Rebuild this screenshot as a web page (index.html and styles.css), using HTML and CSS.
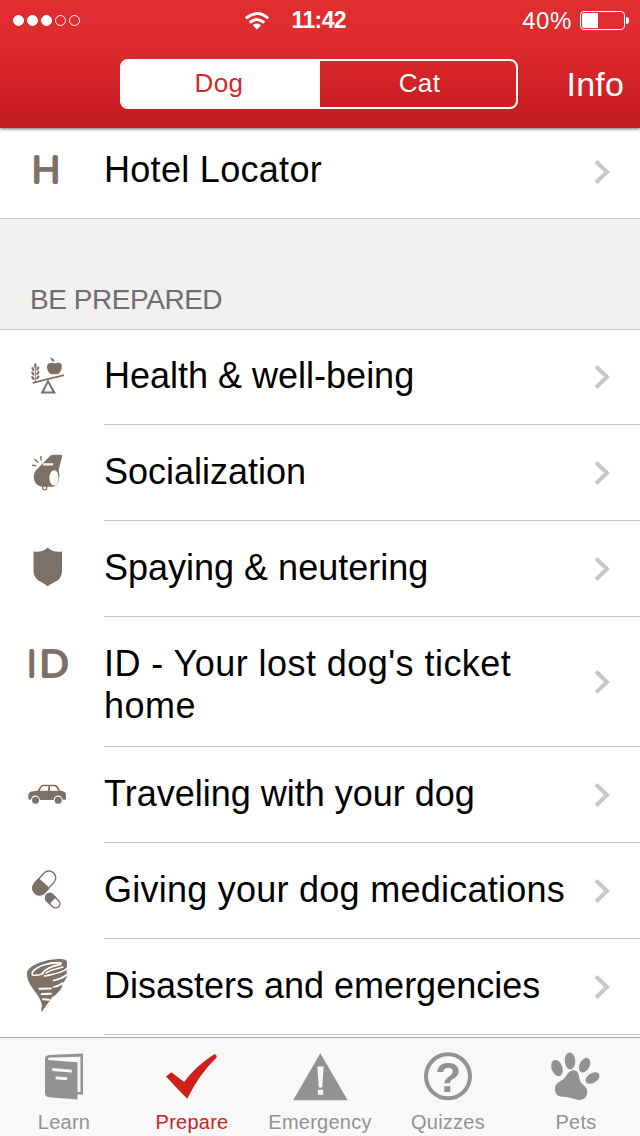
FILE: index.html
```html
<!DOCTYPE html>
<html lang="en">
<head>
    <meta charset="UTF-8">
    <meta name="viewport" content="width=device-width, initial-scale=1.0">
    <title>Prepare</title>
    <link rel="stylesheet" href="styles.css">
</head>
<body>
    <header class="header">
        <div class="status-bar">
            <div class="signal">
                <span class="dot full"></span>
                <span class="dot full"></span>
                <span class="dot full"></span>
                <span class="dot"></span>
                <span class="dot"></span>
            </div>
            <div class="clock">
                <svg class="wifi" width="26" height="20" viewBox="0 0 26 20">
                    <path d="M1.8 7.4Q13 -2.2 24.2 7.4M5.8 11.7Q13 5.4 20.2 11.7" fill="none" stroke="#fff" stroke-width="2.9"/>
                    <path d="M8.8 14.2Q13 10.8 17.2 14.2L13 18.6Z" fill="#fff"/>
                </svg>
                <span class="time">11:42</span>
            </div>
            <div class="power">
                <span class="percent">40%</span>
                <span class="battery"><span class="charge"></span></span>
                <span class="battery-cap"></span>
            </div>
        </div>
        <nav class="nav-bar">
            <div class="segmented">
                <a class="segment selected">Dog</a>
                <a class="segment">Cat</a>
            </div>
            <a class="info">Info</a>
        </nav>
    </header>

    <main class="content">
        <ul class="list">
            <li class="row hotel">
                <svg class="icon" width="70" height="65" viewBox="0 0 70 65">
                    <text class="letter-icon" transform="translate(16.9 38.8) scale(1.12 1)">H</text>
                </svg>
                <div class="cell"><span class="label">Hotel Locator</span><svg class="chevron" width="18" height="26" viewBox="0 0 18 26"><path d="M3 2.5L14 13L3 23.5"/></svg></div>
            </li>
        </ul>

        <h2 class="section-title">BE PREPARED</h2>

        <ul class="list">
            <li class="row first">
                <svg class="icon" width="70" height="65" viewBox="0 0 70 65">
                    <path d="M17.3 37.1L48.7 29.3L49.2 30.9L17.8 38.8Z"/>
                    <path fill-rule="evenodd" d="M33 34.3L41 48.5H25.5ZM33 38.3L29 46.5H37.3Z"/>
                    <path d="M39.5 18.2C42 17 45.6 17.1 46.2 19.5C47.2 22.5 45 28.9 41.5 28.8C40 28.8 39.7 28.2 38.7 28.5C34.5 30 31.2 24 32.2 20.2C33 17.2 37 16.9 39.5 18.2Z" transform="translate(-1 -.3) scale(1.03)"/>
                    <path d="M39.4 17C36.8 16.5 35.5 14.5 35.3 12.8C38 13.2 39.6 14.6 39.4 17Z"/>
                    <path d="M20.4 21V37" fill="none" stroke="#7c7067" stroke-width=".8"/>
                    <ellipse cx="20.3" cy="20.7" rx="1.3" ry="2.4"/>
                    <ellipse cx="17.9" cy="24" rx="1.2" ry="2.3" transform="rotate(-25 17.9 24)"/>
                    <ellipse cx="22.8" cy="23.5" rx="1.2" ry="2.3" transform="rotate(25 22.8 23.5)"/>
                    <ellipse cx="17.9" cy="28.5" rx="1.2" ry="2.3" transform="rotate(-35 17.9 28.5)"/>
                    <ellipse cx="22.8" cy="28" rx="1.2" ry="2.3" transform="rotate(35 22.8 28)"/>
                    <ellipse cx="17.9" cy="33" rx="1.2" ry="2.3" transform="rotate(-35 17.9 33)"/>
                    <ellipse cx="22.8" cy="32.5" rx="1.2" ry="2.3" transform="rotate(35 22.8 32.5)"/>
                </svg>
                <div class="cell"><span class="label">Health &amp; well-being</span><svg class="chevron" width="18" height="26" viewBox="0 0 18 26"><path d="M3 2.5L14 13L3 23.5"/></svg></div>
            </li>
            <li class="row">
                <svg class="icon" width="70" height="65" viewBox="0 0 70 65">
                    <path fill-rule="evenodd" d="M34.5 16.5Q36 14.7 38 14.7H45.5Q47.7 15 46.9 17.3L43.6 29.8Q45.3 35 43.8 41Q41.5 46.8 37 46.8H29C22 47 18.8 42 18.8 37C18.8 32.5 21 30 23.2 28ZM28.5 23.3L27.8 25.4H37.8L38.5 23.3ZM39.2 30.3C36.5 30.3 34.4 33.7 34.4 38C34.4 42.3 36.5 45.5 39.2 45.5C41.8 45.5 43.6 42.3 43.6 38C43.6 33.7 41.8 30.3 39.2 30.3Z"/>
                    <circle cx="29.7" cy="47.7" r="2.2" fill="none" stroke="#7c7067" stroke-width="1.1"/>
                    <path d="M17 25.3L21.3 25.8M19.3 19L23.2 22.5M25.8 16.3L26.2 20.4" fill="none" stroke="#7c7067" stroke-width="1.5"/>
                </svg>
                <div class="cell"><span class="label">Socialization</span><svg class="chevron" width="18" height="26" viewBox="0 0 18 26"><path d="M3 2.5L14 13L3 23.5"/></svg></div>
            </li>
            <li class="row">
                <svg class="icon" width="70" height="65" viewBox="0 1 70 65">
                    <path d="M32.7 12.5Q34 14 37 15.4Q41.5 17.2 47 16.5V36Q47 42 42.5 45.5Q36 48.8 32.7 51.3Q29.5 48.8 23.5 45.5Q18.5 42 18.5 36V16.5Q24 17.2 28.5 15.4Q31.5 14 32.7 12.5Z"/>
                </svg>
                <div class="cell"><span class="label">Spaying &amp; neutering</span><svg class="chevron" width="18" height="26" viewBox="0 0 18 26"><path d="M3 2.5L14 13L3 23.5"/></svg></div>
            </li>
            <li class="row tall">
                <svg class="icon" width="70" height="65" viewBox="0 -3 70 65">
                    <text class="letter-icon" transform="translate(12.6 40.6)">I</text>
                    <text class="letter-icon" transform="translate(24.7 40.6) scale(1.18 1)">D</text>
                </svg>
                <div class="cell"><span class="label">ID - Your lost dog's ticket home</span><svg class="chevron" width="18" height="26" viewBox="0 0 18 26"><path d="M3 2.5L14 13L3 23.5"/></svg></div>
            </li>
            <li class="row">
                <svg class="icon" width="70" height="65" viewBox="0 -8 70 65">
                    <path fill-rule="evenodd" d="M13.3 25Q14 21.5 18 21.2L22.5 20.7L25.2 16.4Q26.2 14.8 28 14.8H40Q41.8 14.8 42.7 16.3L45 20.6Q48.5 21 50 22.3Q51.3 23.5 50.9 29.8H47.7Q46.8 25.5 43.2 25.5Q39.3 25.5 38.6 30H25Q24.2 25.5 20.4 25.5Q16.7 25.5 15.9 29.8L13.3 29.2ZM24.7 20.7H33L33.4 16.3H28.3Q26.9 16.4 26.2 17.7ZM35 20.7H43.2L41.3 17.5Q40.7 16.3 39 16.3H35Z"/>
                    <circle cx="20.5" cy="30.2" r="3.5"/>
                    <circle cx="43.2" cy="30.2" r="3.5"/>
                </svg>
                <div class="cell"><span class="label">Traveling with your dog</span><svg class="chevron" width="18" height="26" viewBox="0 0 18 26"><path d="M3 2.5L14 13L3 23.5"/></svg></div>
            </li>
            <li class="row wide">
                <svg class="icon" width="70" height="65" viewBox="0 -2 70 65">
                    <g transform="translate(29.2 23) rotate(-48)">
                        <rect x="-13.8" y="-6.8" width="27.6" height="13.6" rx="6.8" fill="none" stroke="#7c7067" stroke-width="1.4"/>
                        <path d="M0 -7.5H-6.5A7.5 7.5 0 0 0 -6.5 7.5H0Z"/>
                    </g>
                    <g transform="translate(37.7 40.7) rotate(45)">
                        <rect x="-8.4" y="-4.2" width="16.8" height="8.4" rx="4.2" fill="none" stroke="#7c7067" stroke-width="1.4"/>
                        <path d="M0 -4.9H-4.2A4.9 4.9 0 0 0 -4.2 4.9H0Z"/>
                    </g>
                </svg>
                <div class="cell"><span class="label">Giving your dog medications</span><svg class="chevron" width="18" height="26" viewBox="0 0 18 26"><path d="M3 2.5L14 13L3 23.5"/></svg></div>
            </li>
            <li class="row">
                <svg class="icon" width="70" height="65" viewBox="0 4 70 65">
                    <path d="M12 24C11.7 17.5 24 11.5 36 9.8C46 8.2 52.3 9 52 12.5Q51.8 18 51.6 23Q53 22 51.5 27.5Q48 33.5 46 36.5L47.5 36Q45 42 37 47.5Q31 56 26.5 62.2Q25.5 60 27 55.5C26 48.5 20 42 15.8 35.5C13 31 12 27 12 24Z"/>
                    <g fill="none" stroke="#fff" stroke-linecap="round">
                        <path d="M17.5 22C22 16 34 12.4 44.8 12.8C47 13 46.5 14 44.7 14.6C38 16 31 18.5 27.5 23" stroke-width="1.8"/>
                        <path d="M17.5 22.5C15 26.5 22 25.7 28 23.7" stroke-width="1.5"/>
                        <path d="M52 18.5C48 23 38 24 29.5 26M51.8 24.5C48 28 43 29.5 38.5 30.5M47.5 33Q43 36.5 38.5 37" stroke-width="1.7"/>
                        <path d="M24.5 38.8L36 38.4M26.8 44L36 43.8M28 49.2L34 49.7" stroke-width="2"/>
                        <path d="M31 23C36 19.5 43 18.6 48 17" stroke-width="1.4"/>
                    </g>
                </svg>
                <div class="cell"><span class="label">Disasters and emergencies</span><svg class="chevron" width="18" height="26" viewBox="0 0 18 26"><path d="M3 2.5L14 13L3 23.5"/></svg></div>
            </li>
        </ul>
    </main>

    <footer class="tab-bar">
        <a class="tab">
            <svg width="56" height="56" viewBox="0 0 56 56">
                <path fill-rule="evenodd" d="M13 9Q9 9.4 9 13V47Q9 51 13 51.2L41.5 53.5V48.5H47V7.5ZM12 13.8Q11.4 11.8 14 11.5L44.5 10.7V46H41.5V16.2L14.5 14.3Q12.5 14.2 12 13.8ZM16.2 22L35.8 23.8V26.6L16.2 25ZM19.6 30.4L31 31.3V34.2L19.6 33.2Z"/>
            </svg>
            <span>Learn</span>
        </a>
        <a class="tab active">
            <svg width="56" height="56" viewBox="0 0 56 56">
                <path d="M2 30.5L7.3 26.3L20.2 36Q31 21 49.8 8.6Q51 7.8 52.6 9.7Q53 11 52 12.2Q36 27 23.2 52.7Q13 42.5 2 30.5Z"/>
            </svg>
            <span>Prepare</span>
        </a>
        <a class="tab">
            <svg width="56" height="56" viewBox="0 0 56 56">
                <path fill-rule="evenodd" d="M28.3 7.3L55.7 54.3H1.2ZM25.3 20.5L26.8 41.5H30.2L31.7 20.5ZM25.8 43.7V48.7H31.2V43.7Z"/>
            </svg>
            <span>Emergency</span>
        </a>
        <a class="tab">
            <svg width="56" height="56" viewBox="0 0 56 56">
                <circle cx="28" cy="30.3" r="22" fill="none" stroke="#929292" stroke-width="4"/>
                <text class="question" x="28" y="46">?</text>
            </svg>
            <span>Quizzes</span>
        </a>
        <a class="tab">
            <svg width="56" height="56" viewBox="0 0 56 56">
                <ellipse cx="9" cy="22" rx="5.4" ry="8.4" transform="rotate(-20 9 22)"/>
                <ellipse cx="22" cy="14.9" rx="5.3" ry="8.5" transform="rotate(-3 22 14.9)"/>
                <ellipse cx="36.6" cy="19.2" rx="5" ry="7.8" transform="rotate(27 36.6 19.2)"/>
                <ellipse cx="44.5" cy="32" rx="4.9" ry="7.7" transform="rotate(57 44.5 32)"/>
                <path d="M20.5 26.7C23.5 23.2 28.5 23.3 30.3 27.5C31.7 31.5 31.2 34.5 33.8 37.5C37 40.5 39.5 42.3 39.3 46.5C38.8 52 34.5 54.8 29.5 53.7C24.5 52.5 19.5 50.8 14 50.8C8.5 50.3 6 45.5 7.2 41C8 37 12 35.5 15 33.5C18 31 18.5 28.8 20.5 26.7Z"/>
            </svg>
            <span>Pets</span>
        </a>
    </footer>
</body>
</html>
```

FILE: styles.css
```css
body {
    margin: 0;
    width: 640px;
    height: 1136px;
    display: flex;
    flex-direction: column;
    overflow: hidden;
    background-color: #fff;
    color: #000;
    font-family: "Liberation Sans", Arial, sans-serif;
}

.header {
    position: relative;
    flex: none;
    height: 128px;
    color: #fff;
    background: linear-gradient(#e02d31 0, #df2c30 40px, #c3191d 128px);
    box-shadow: 0 1px 3px rgba(0, 0, 0, 0.6);
}

.status-bar {
    display: grid;
    grid-template-columns: 1fr auto 1fr;
    align-items: center;
    height: 41px;
    padding: 0 11px 0 13px;
}

.signal {
    display: flex;
    gap: 3px;
}

.dot {
    width: 11px;
    height: 11px;
    border: 1px solid #fff;
    border-radius: 50%;
    box-sizing: border-box;
}

.dot.full {
    background-color: #fff;
}

.clock {
    display: flex;
    align-items: center;
    gap: 22px;
    padding-right: 52px;
}

.time {
    width: 55px;
    font-size: 23px;
    font-weight: bold;
    letter-spacing: -0.6px;
    white-space: nowrap;
}

.power {
    display: flex;
    justify-content: flex-end;
    align-items: center;
}

.percent {
    margin-right: 8px;
    font-size: 24px;
    letter-spacing: 0.6px;
}

.battery {
    width: 45px;
    height: 19px;
    padding: 1px;
    border: 1px solid #fff;
    border-radius: 4px;
    box-sizing: border-box;
}

.charge {
    display: block;
    width: 16px;
    height: 15px;
    border-radius: 2px 0 0 2px;
    background-color: #fff;
}

.battery-cap {
    width: 3px;
    height: 7px;
    margin-left: 1px;
    border-radius: 0 3px 3px 0;
    background-color: #fff;
}

.nav-bar {
    display: flex;
    justify-content: space-between;
    align-items: flex-start;
    padding: 18px 16px 0 120px;
}

.segmented {
    display: flex;
    width: 398px;
    height: 50px;
    border: 2px solid #fff;
    border-radius: 8px;
    box-sizing: border-box;
    overflow: hidden;
}

.segment {
    flex: 1;
    font-size: 26px;
    line-height: 45px;
    text-align: center;
    letter-spacing: 0.4px;
}

.segment.selected {
    flex: none;
    width: 198px;
    padding-right: 4px;
    box-sizing: border-box;
    background-color: #fff;
    color: #d3272b;
}

.segment:last-child {
    padding-left: 3px;
}

.info {
    font-size: 34px;
    line-height: 50px;
    letter-spacing: 0.2px;
}

.content {
    flex: 1;
    min-height: 0;
}

.list {
    margin: 0;
    padding: 0;
    list-style: none;
}

.row {
    display: flex;
    height: 96px;
}

.row.first {
    height: 95px;
}

.row.tall {
    height: 130px;
}

.row.hotel {
    height: 91px;
    border-bottom: 1px solid #c8c7cc;
    box-sizing: border-box;
}

.icon {
    flex: none;
    margin: 15px 19px 0 15px;
    fill: #7c7067;
}

.letter-icon {
    font-family: Inter, "Liberation Sans", sans-serif;
    font-size: 34px;
    font-weight: 100;
    stroke: #7c7067;
    stroke-width: 4px;
    stroke-linejoin: round;
}

.cell {
    flex: 1;
    display: flex;
    justify-content: space-between;
    align-items: center;
    padding-right: 29px;
    border-bottom: 1px solid #c8c7cc;
}

.label {
    max-width: 470px;
    padding-bottom: 2px;
    font-size: 36px;
    line-height: 42px;
}

.chevron {
    flex: none;
    fill: none;
    stroke: #c7c7cc;
    stroke-width: 4px;
}

.first .label {
    padding-bottom: 3px;
}

.hotel .cell {
    padding-bottom: 3px;
    border-bottom: none;
}

.hotel .label {
    padding-bottom: 3px;
    letter-spacing: 0.3px;
}

.tall .label {
    padding: 7px 0 0;
    letter-spacing: 0.45px;
}

.wide .label {
    letter-spacing: 0.25px;
}

.section-title {
    height: 111px;
    margin: 0;
    padding: 63px 30px 0;
    border-bottom: 1px solid #c8c7cc;
    box-sizing: border-box;
    background-color: #f1f0ee;
    color: #6d6d72;
    font-size: 28px;
    font-weight: normal;
    line-height: 36px;
    letter-spacing: -0.45px;
}

.tab-bar {
    position: relative;
    flex: none;
    display: grid;
    grid-template-columns: repeat(5, 1fr);
    height: 98px;
    border-top: 1px solid #acacac;
    background-color: #f8f8f8;
}

.tab {
    display: flex;
    flex-direction: column;
    align-items: center;
    padding-top: 8px;
    color: #929292;
    fill: #929292;
    font-size: 20px;
    line-height: 24px;
    letter-spacing: 0.25px;
}

.tab svg {
    margin-bottom: 8px;
}

.tab.active {
    color: #d0201a;
    fill: #d0201a;
}

.question {
    font-size: 42px;
    font-weight: bold;
    text-anchor: middle;
    letter-spacing: 0;
}
```
